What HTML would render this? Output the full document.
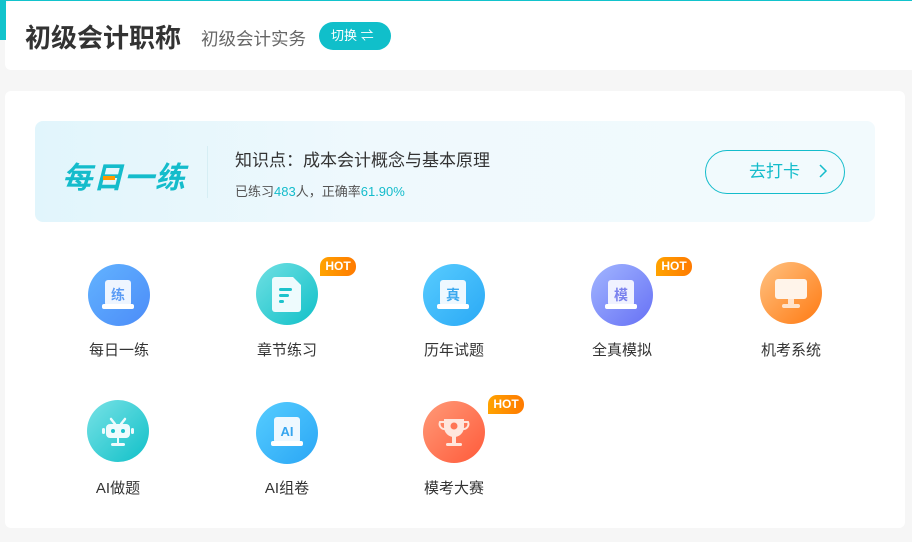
<!DOCTYPE html>
<html><head><meta charset="utf-8"><style>
*{margin:0;padding:0;box-sizing:border-box}
body{width:912px;height:542px;background:#f6f6f6;font-family:"Liberation Sans","Noto Sans CJK SC",sans-serif;position:relative;overflow:hidden}
.strip{position:absolute;left:0;top:0;width:6px;height:40px;background:#12c3cc}
.topline{position:absolute;left:0;top:0;width:912px;height:1px;background:#12c3cc}
.top{position:absolute;left:5px;top:1px;width:907px;height:69px;background:#fff;border-radius:6px 0 0 6px}
.t1{position:absolute;left:25px;top:18px;font-size:26px;font-weight:bold;color:#333}
.t2{position:absolute;left:201px;top:26px;font-size:17.5px;color:#666}
.sw{position:absolute;left:319px;top:22px;width:72px;height:28px;border-radius:14px;background:#10bfca;color:#fff;font-size:13px;line-height:28px;padding-left:12px}
.main{position:absolute;left:5px;top:91px;width:900px;height:437px;background:#fff;border-radius:6px}
.ban{position:absolute;left:35px;top:121px;width:840px;height:101px;border-radius:8px;background:linear-gradient(90deg,#e1f5fc,#eff9fd 40%,#f2fafd)}
.logo{position:absolute;left:62px;top:153px;font-size:30px;font-weight:bold;font-style:italic;color:#14bccb;letter-spacing:1px}
.bar{position:absolute;left:103px;top:176px;width:12px;height:4px;background:#ff9a00}
.div{position:absolute;left:207px;top:146px;width:1px;height:52px;background:#d6eef4}
.k1{position:absolute;left:235px;top:146px;font-size:17px;color:#333}
.k2{position:absolute;left:235px;top:181px;font-size:13px;color:#555}
.k2 b{font-weight:normal;color:#14bccb}
.go{position:absolute;left:705px;top:150px;width:140px;height:44px;border:1px solid #14bccb;border-radius:22px;color:#14bccb;font-size:17px;line-height:42px;padding-left:43px}
.it{position:absolute;width:120px;text-align:center;font-size:15px;color:#333}
.ic{position:absolute;width:62px;height:62px;border-radius:50%}
.hot{position:absolute;width:36px;height:19px;border-radius:9px 9px 9px 0;background:linear-gradient(90deg,#ffa300,#ff7a00);color:#fff;font-size:12px;font-weight:bold;line-height:19px;text-align:center}
.ic svg{position:absolute;left:0;top:0}
</style></head><body>
<div class="top"></div><div class="strip"></div><div class="topline"></div>
<div class="t1">初级会计职称</div>
<div class="t2">初级会计实务</div>
<div class="sw">切换 ⇌</div>
<div class="main"></div>
<div class="ban"></div>
<div class="logo">每日一练</div>
<div class="bar"></div>
<div class="div"></div>
<div class="k1">知识点：成本会计概念与基本原理</div>
<div class="k2">已练习<b>483</b>人，正确率<b>61.90%</b></div>
<div class="go">去打卡 <svg width="12" height="14" style="margin-left:12px;vertical-align:-1px"><path d="M3 1l6 6-6 6" stroke="#14bccb" stroke-width="1.5" fill="none"/></svg></div>

<div class="ic" style="left:88px;top:264px;background:linear-gradient(135deg,#62b3ff,#4c8cf8)"><svg width="62" height="62"><rect x="17" y="16" width="26" height="26" rx="3" fill="#eef5ff"/><rect x="14" y="40" width="32" height="5" rx="2" fill="#fff"/><text x="30" y="36" font-size="14" font-weight="bold" fill="#5a9bf5" text-anchor="middle" font-family="Noto Sans CJK SC">练</text></svg></div>
<div class="it" style="left:59px;top:339px">每日一练</div>

<div class="ic" style="left:256px;top:263px;background:linear-gradient(135deg,#70e0e3,#10c0c8)"><svg width="62" height="62"><path d="M19 14h18l8 8v24a3 3 0 0 1-3 3H19a3 3 0 0 1-3-3V17a3 3 0 0 1 3-3z" fill="#eefbfd"/><rect x="23" y="25" width="13" height="3" rx="1.5" fill="#1cc3cc"/><rect x="23" y="31" width="10" height="3" rx="1.5" fill="#1cc3cc"/><rect x="23" y="37" width="5" height="3" rx="1.5" fill="#1cc3cc"/></svg></div>
<div class="hot" style="left:320px;top:257px">HOT</div>
<div class="it" style="left:227px;top:339px">章节练习</div>

<div class="ic" style="left:423px;top:264px;background:linear-gradient(135deg,#58ccff,#2aa9f5)"><svg width="62" height="62"><rect x="17" y="16" width="26" height="26" rx="3" fill="#eef8ff"/><rect x="14" y="40" width="32" height="5" rx="2" fill="#fff"/><text x="30" y="36" font-size="14" font-weight="bold" fill="#3aa8ef" text-anchor="middle" font-family="Noto Sans CJK SC">真</text></svg></div>
<div class="it" style="left:394px;top:339px">历年试题</div>

<div class="ic" style="left:591px;top:264px;background:linear-gradient(135deg,#a2b6ff,#6670f5)"><svg width="62" height="62"><rect x="17" y="16" width="26" height="26" rx="3" fill="#f0f2ff"/><rect x="14" y="40" width="32" height="5" rx="2" fill="#fff"/><text x="30" y="36" font-size="14" font-weight="bold" fill="#7b82ee" text-anchor="middle" font-family="Noto Sans CJK SC">模</text></svg></div>
<div class="hot" style="left:656px;top:257px">HOT</div>
<div class="it" style="left:562px;top:339px">全真模拟</div>

<div class="ic" style="left:760px;top:262px;background:linear-gradient(135deg,#ffc282,#ff7a12)"><svg width="62" height="62"><rect x="15" y="17" width="32" height="20" rx="3" fill="#fff4ea"/><rect x="28" y="37" width="6" height="6" fill="#ffe3cc"/><rect x="22" y="42" width="18" height="4" rx="2" fill="#ffe3cc"/></svg></div>
<div class="it" style="left:731px;top:339px">机考系统</div>

<div class="ic" style="left:87px;top:400px;background:linear-gradient(135deg,#78e2e6,#10c0c8)"><svg width="62" height="62"><path d="M24 19l4 5M38 19l-4 5" stroke="#eefbfd" stroke-width="2.5" stroke-linecap="round"/><rect x="19" y="24" width="24" height="14" rx="4" fill="#eefbfd"/><rect x="15" y="28" width="3" height="6" rx="1.5" fill="#eefbfd"/><rect x="44" y="28" width="3" height="6" rx="1.5" fill="#eefbfd"/><circle cx="26" cy="31" r="2" fill="#1cc3cc"/><circle cx="36" cy="31" r="2" fill="#1cc3cc"/><rect x="30" y="38" width="2" height="6" fill="#eefbfd"/><rect x="24" y="43" width="14" height="3" rx="1.5" fill="#eefbfd"/></svg></div>
<div class="it" style="left:58px;top:477px">AI做题</div>

<div class="ic" style="left:256px;top:402px;background:linear-gradient(135deg,#56cdff,#2aa6f5)"><svg width="62" height="62"><rect x="18" y="15" width="26" height="26" rx="3" fill="#eef8ff"/><rect x="15" y="39" width="32" height="5" rx="2" fill="#fff"/><text x="31" y="34" font-size="13" font-weight="bold" fill="#36a5ef" text-anchor="middle">AI</text></svg></div>
<div class="it" style="left:227px;top:477px">AI组卷</div>

<div class="ic" style="left:423px;top:401px;background:linear-gradient(135deg,#ff9a78,#ff5a3a)"><svg width="62" height="62"><path d="M21 18h20v8a10 10 0 0 1-20 0z" fill="#ffe6dd"/><path d="M21 21h-4a5 5 0 0 0 5 7M41 21h4a5 5 0 0 1-5 7" stroke="#ffe6dd" stroke-width="2" fill="none"/><rect x="29" y="35" width="4" height="7" fill="#ffe6dd"/><rect x="23" y="42" width="16" height="3" rx="1.5" fill="#ffe6dd"/><circle cx="31" cy="25" r="3.5" fill="#ff7555"/></svg></div>
<div class="hot" style="left:488px;top:395px">HOT</div>
<div class="it" style="left:394px;top:477px">模考大赛</div>
</body></html>
